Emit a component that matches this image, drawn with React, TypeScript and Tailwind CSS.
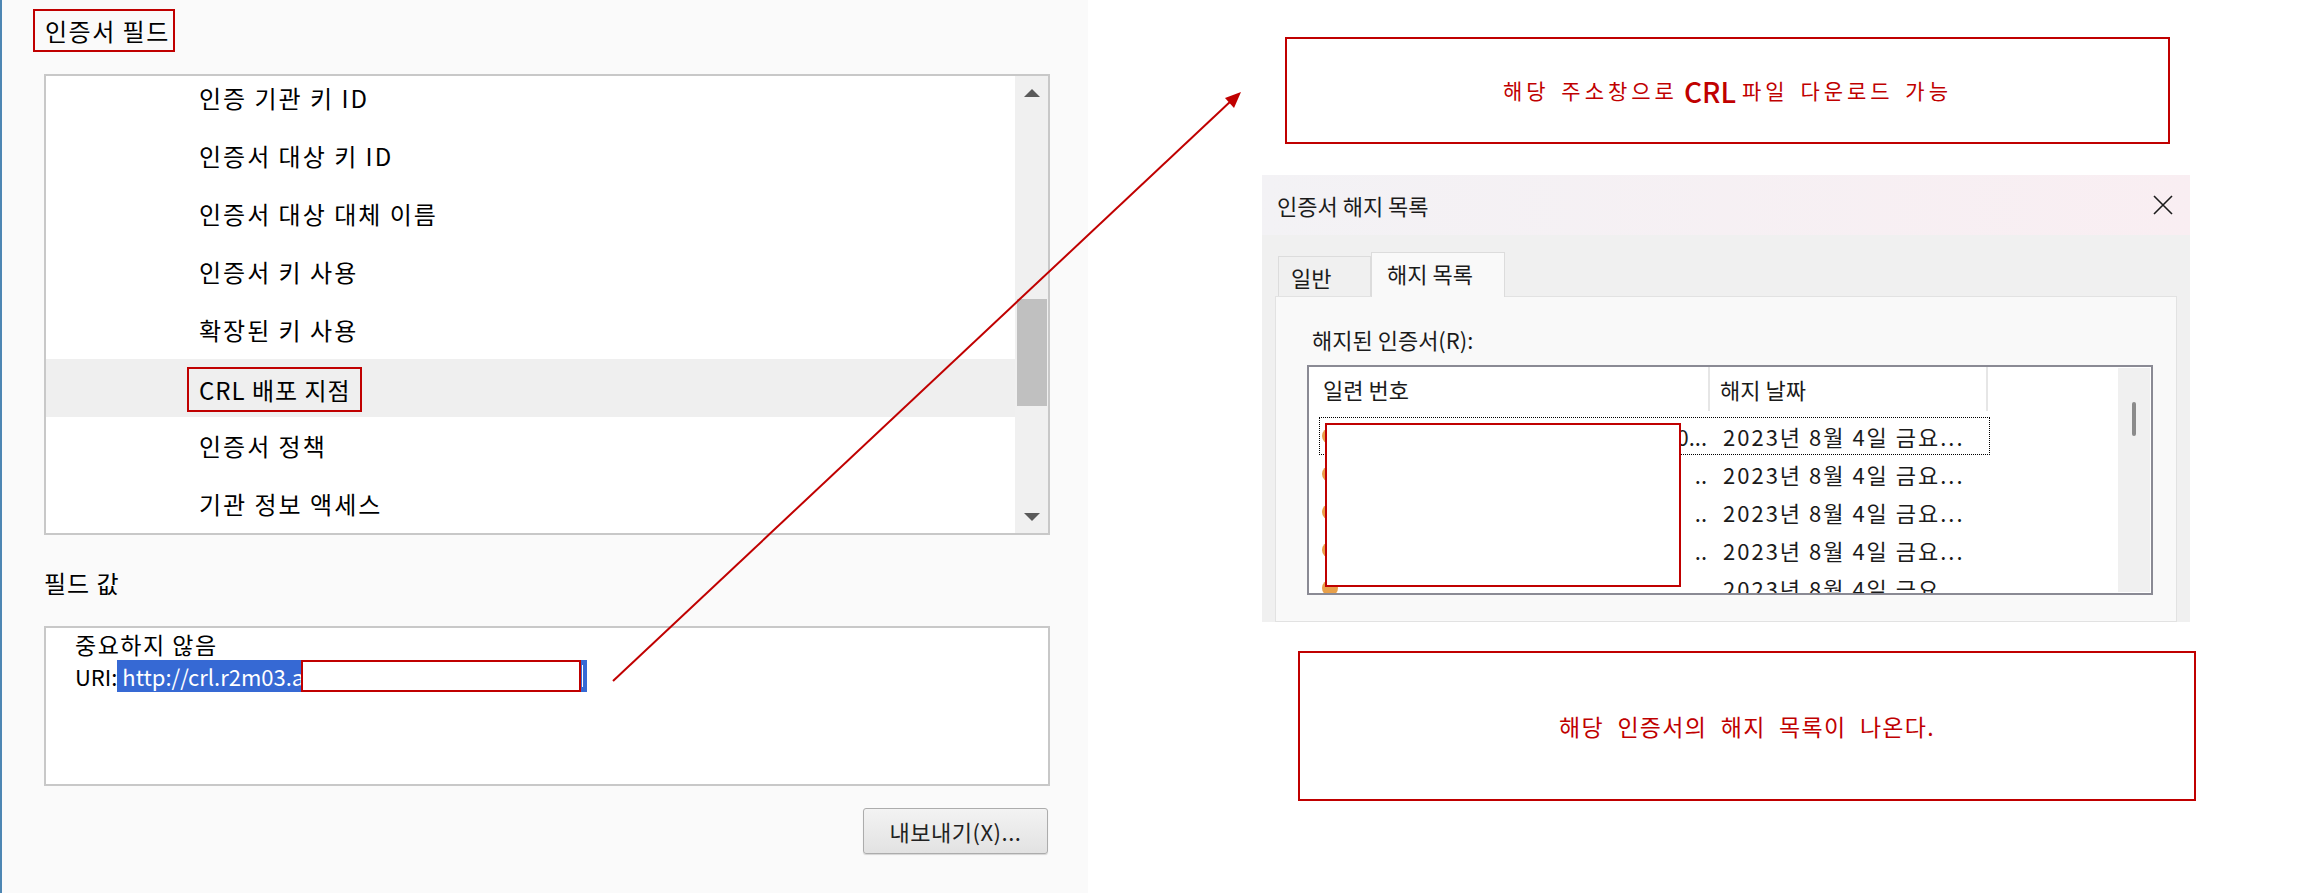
import React from "react";

const F = "font-['Noto_Sans_CJK_KR','Noto_Sans',sans-serif]";

const fields = [
    "인증 기관 키 ID",
    "인증서 대상 키 ID",
    "인증서 대상 대체 이름",
    "인증서 키 사용",
    "확장된 키 사용",
    "CRL 배포 지점",
    "인증서 정책",
    "기관 정보 액세스",
];

const revoked = [0, 1, 2, 3, 4];

function CertFields() {
    return (
        <div className="flex h-full w-[1088px] shrink-0 flex-col border-l-2 border-[#4d86b3] bg-[#fafafa] pl-[42px]">
            {/* 인증서 필드 label */}
            <div className="-ml-[11px] mt-[9px] flex h-[43px] w-[142px] items-center border-2 border-[#c00000] pl-[10px] text-[24px] leading-none tracking-[1.5px]">
                인증서 필드
            </div>

            {/* Field list */}
            <div className="mt-[22px] flex h-[461px] w-[1006px] border-2 border-[#c8c8c8] bg-white">
                <div className="flex-1 overflow-hidden">
                    <div className="-mt-[7px] flex flex-col">
                        {fields.map((f, i) => (
                            <div
                                key={f}
                                className={`flex h-[58px] items-center pl-[153px] text-[24px] leading-none tracking-[2px] ${
                                    i === 5 ? "bg-[#efefef]" : ""
                                }`}
                            >
                                {i === 5 ?
                                    <span className="-ml-[12px] mt-[3px] flex h-[45px] w-[175px] items-center border-2 border-[#c00000] pl-[10px] tracking-[1px]">
                                        {f}
                                    </span>
                                :   f}
                            </div>
                        ))}
                    </div>
                </div>
                <div className="flex w-[33px] flex-col items-center bg-[#f0f0f0]">
                    <div className="mt-[13px] h-0 w-0 border-x-[8px] border-b-[8px] border-x-transparent border-b-[#5a5a5a]" />
                    <div className="mt-[202px] h-[107px] w-[30px] bg-[#c0c0c0]" />
                    <div className="mt-[107px] h-0 w-0 border-x-[8px] border-t-[8px] border-x-transparent border-t-[#5a5a5a]" />
                </div>
            </div>

            {/* 필드 값 */}
            <div className="mt-[33px] text-[24px] leading-[30px] tracking-[1px]">필드 값</div>
            <div className="mt-[28px] h-[160px] w-[1006px] border-2 border-[#c8c8c8] bg-white pl-[29px] text-[22px] leading-[32px]">
                <div className="text-[23px] tracking-[1.5px]">중요하지 않음</div>
                <div className="flex items-center whitespace-nowrap">
                    <span>URI:</span>
                    <span className="flex h-[32px] items-center bg-[#3669d4] text-white">
                        <span className="w-[184px] overflow-hidden whitespace-pre">
                            {" http://crl.r2m03.a"}
                        </span>
                        <span className="h-[32px] w-[280px] border-2 border-[#c00000] bg-white" />
                        <span className="ml-[1px] h-[22px] w-px bg-white" />
                        <span className="w-[4px]" />
                    </span>
                </div>
            </div>

            <div className="mt-[22px] flex w-[1006px] justify-end pr-[2px]">
                <button className="flex h-[46px] w-[185px] items-center justify-center rounded-[3px] border border-[#acacac] bg-linear-to-b from-[#f3f3f3] to-[#e2e2e2] text-[22px] leading-none tracking-[0.5px] text-[#222] shadow-[0_1px_1px_rgba(0,0,0,0.15)]">
                    내보내기(X)...
                </button>
            </div>
        </div>
    );
}

function RevocationDialog() {
    return (
        <div className="ml-[174px] mt-[31px] flex h-[447px] w-[928px] flex-col overflow-hidden text-[22px] leading-none text-[#1b1b1b]">
            {/* title bar */}
            <div className="flex h-[60px] shrink-0 items-center justify-between bg-linear-to-r from-[#f3f2f5] to-[#f9eef2] pl-[15px] pr-[16px]">
                <span>인증서 해지 목록</span>
                <svg width="22" height="20" viewBox="0 0 22 20" fill="none" stroke="#1b1b1b" strokeWidth="1.6">
                    <path d="M2 1 L20 19 M20 1 L2 19" />
                </svg>
            </div>

            <div className="flex flex-1 flex-col bg-[#f0f0f0] px-[13px] pt-[17px]">
                {/* tabs */}
                <div className="flex items-end">
                    <div className="ml-[3px] flex h-[40px] w-[93px] items-center border border-b-0 border-[#dcdcdc] pl-[12px]">
                        일반
                    </div>
                    <div className="relative z-10 -mb-px flex h-[45px] w-[134px] items-center border border-b-0 border-[#dcdcdc] bg-[#f9f9f9] pb-[4px] pl-[15px]">
                        해지 목록
                    </div>
                </div>

                {/* panel */}
                <div className="flex-1 border border-[#e2e2e2] bg-[#f9f9f9] pl-[31px] pt-[31px]">
                    <div className="pl-[5px]">해지된 인증서(R):</div>

                    <div className="mt-[15px] flex h-[230px] w-[846px] border-2 border-[#8a8a94] bg-white">
                        <div className="relative flex-1 overflow-hidden">
                            <div className="flex h-[44px]">
                                <div className="flex w-[401px] items-center border-r-2 border-[#e6e6e6] pl-[14px]">
                                    일련 번호
                                </div>
                                <div className="flex w-[278px] items-center border-r-2 border-[#e6e6e6] pl-[10px]">
                                    해지 날짜
                                </div>
                            </div>

                            <div className="mt-[6px] flex flex-col">
                                {revoked.map((r) => (
                                    <div
                                        key={r}
                                        className={`ml-[10px] flex h-[38px] w-[671px] items-center border border-dotted ${
                                            r === 0 ? "border-black" : "border-transparent"
                                        }`}
                                    >
                                        <div className="flex w-[391px] items-center justify-between pl-[2px] pr-[4px]">
                                            <span className="h-[16px] w-[16px] rounded-full bg-[#e8a04a]" />
                                            <span>{r === 0 ? "0..." : ".."}</span>
                                        </div>
                                        <div className="pl-[12px] whitespace-nowrap tracking-[2px]">
                                            2023년 8월 4일 금요...
                                        </div>
                                    </div>
                                ))}
                            </div>

                            {/* masked serial numbers */}
                            <div className="absolute left-[16px] top-[56px] h-[164px] w-[356px] border-2 border-[#c00000] bg-white" />
                        </div>

                        <div className="my-px mr-px w-[32px] bg-[#f0f0f0] pl-[14px] pt-[34px]">
                            <div className="h-[34px] w-[4px] rounded-full bg-[#8b8b8b]" />
                        </div>
                    </div>
                </div>
            </div>
        </div>
    );
}

function Annotations() {
    return (
        <div className="flex flex-1 flex-col">
            <div className="ml-[197px] mt-[37px] flex h-[107px] w-[885px] items-center justify-center border-2 border-[#c00000] text-[21px] leading-none tracking-[4px] text-[#c00000] [word-spacing:3px]">
                해당 주소창으로{" "}
                <span className="mx-[6px] text-[28px] font-medium tracking-normal">CRL</span>{" "}
                파일 다운로드 가능
            </div>

            <RevocationDialog />

            <div className="ml-[210px] mt-[29px] flex h-[150px] w-[898px] items-center justify-center border-2 border-[#c00000] text-[23px] leading-none tracking-[1.3px] text-[#c00000] [word-spacing:7px]">
                해당 인증서의 해지 목록이 나온다.
            </div>
        </div>
    );
}

function Arrow() {
    return (
        <svg className="pointer-events-none absolute inset-0" width="2317" height="893">
            <line x1="613" y1="681" x2="1232" y2="100" stroke="#c00000" strokeWidth="2" />
            <polygon points="1241,92 1234,108 1225,98" fill="#c00000" />
        </svg>
    );
}

export default function App() {
    return (
        <div className={`relative flex h-[893px] w-[2317px] overflow-hidden bg-white text-black ${F}`}>
            <CertFields />
            <Annotations />
            <Arrow />
        </div>
    );
}
